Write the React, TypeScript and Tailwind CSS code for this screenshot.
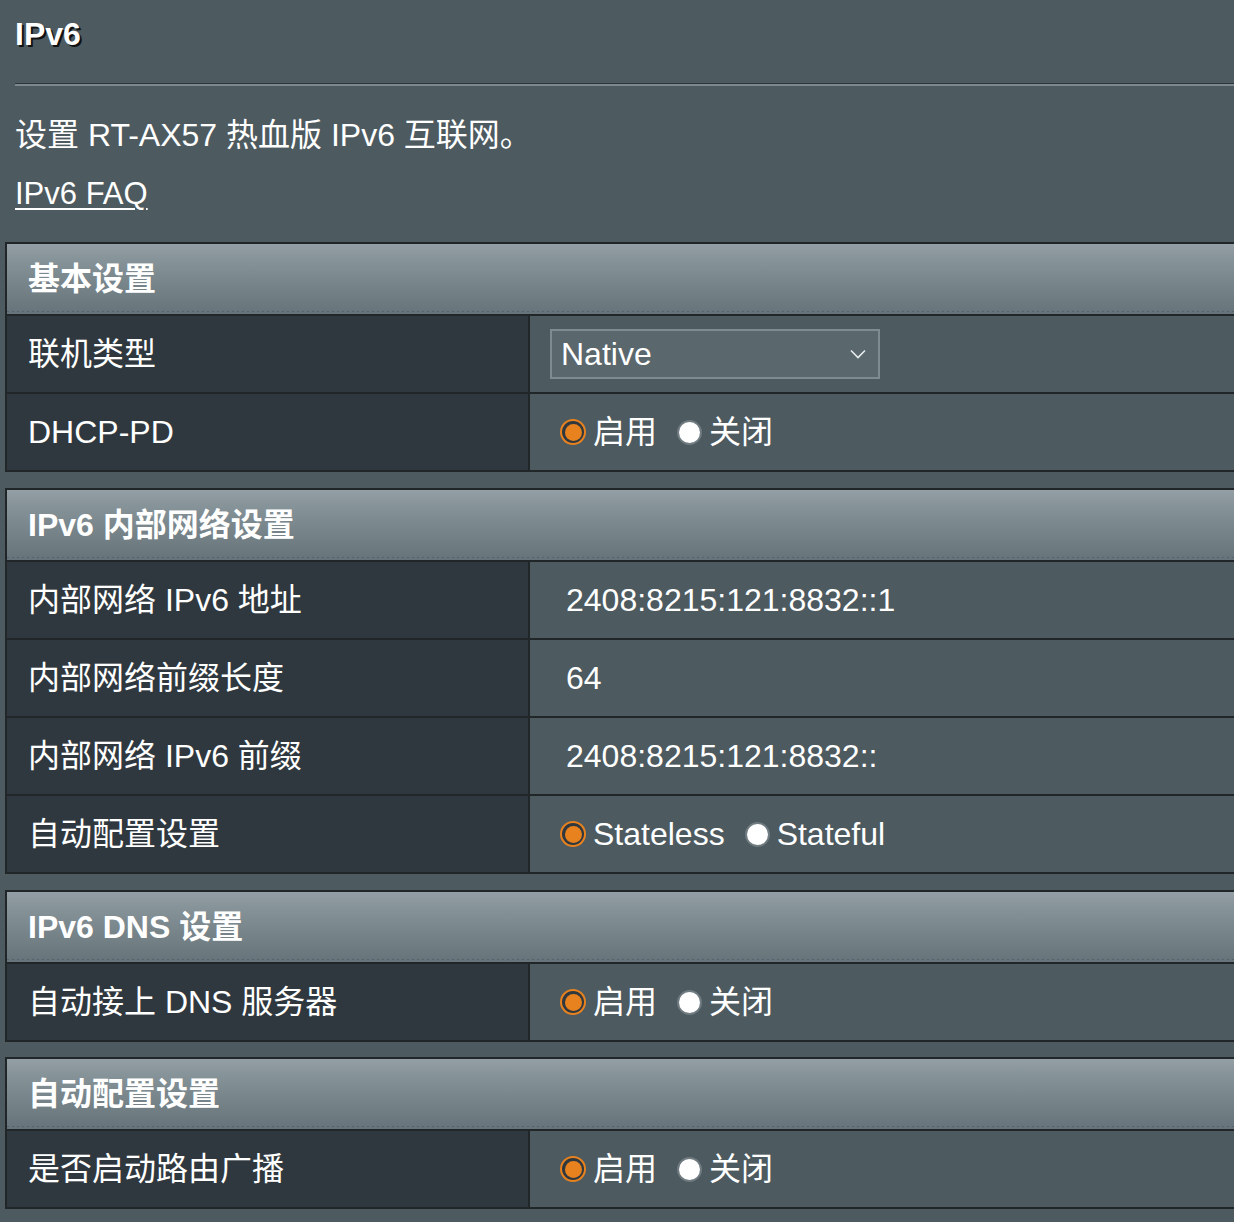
import React from "react";

const FONT = { fontFamily: '"Liberation Sans", Arial, "Noto Sans CJK SC", sans-serif' };

function Radio({ checked }: { checked: boolean }) {
  if (checked) {
    return (
      <span className="inline-flex h-[26px] w-[26px] items-center justify-center rounded-full bg-[#e8821f]">
        <span className="inline-flex h-[22px] w-[22px] items-center justify-center rounded-full bg-[#2f383e]">
          <span className="block h-[17px] w-[17px] rounded-full bg-[#e8821f]" />
        </span>
      </span>
    );
  }
  return (
    <span className="inline-flex h-[25px] w-[25px] items-center justify-center rounded-full bg-[#6f7b81]">
      <span className="block h-[21px] w-[21px] rounded-full bg-white" />
    </span>
  );
}

function RadioGroup({ options }: { options: string[] }) {
  return (
    <div className="flex items-center pl-[30px]">
      {options.map((o, i) => (
        <div key={o} className={"flex items-center gap-[7px] " + (i > 0 ? "ml-[20px]" : "")}>
          <Radio checked={i === 0} />
          <span>{o}</span>
        </div>
      ))}
    </div>
  );
}

function Row({ label, children }: { label: string; children: React.ReactNode }) {
  return (
    <div className="flex h-[78px] border-t-2 border-[#212729]">
      <div className="flex w-[523px] shrink-0 items-center border-r-2 border-[#212729] bg-[#2f383e] pl-[21px]">
        {label}
      </div>
      <div className="flex flex-1 items-center bg-[#4d5a60]">{children}</div>
    </div>
  );
}

function Section({ title, children }: { title: string; children: React.ReactNode }) {
  return (
    <div className="ml-[5px] w-[1240px] border-2 border-[#212729]">
      <div className="relative flex h-[70px] items-center bg-[linear-gradient(to_bottom,#939fa5_0%,#87949a_20%,#7a878d_50%,#6e7b81_80%,#66737a_100%)] pl-[21px] font-bold">
        {title}
        <div className="absolute bottom-[2px] left-0 right-0 h-[1px] bg-[repeating-linear-gradient(to_right,#56626a_0px,#56626a_2px,transparent_2px,transparent_5px)]" />
      </div>
      {children}
    </div>
  );
}

function Value({ text }: { text: string }) {
  return <span className="pl-[36px]">{text}</span>;
}

export default function App() {
  return (
    <div
      className="min-h-[1222px] w-full overflow-hidden bg-[#4d5a60] text-[32px] leading-none text-white"
      style={FONT}
    >
      <div className="flex h-[68px] items-center pl-[15px] text-[32px] font-bold [text-shadow:2px_2px_0_#111]">
        IPv6
      </div>
      <div className="ml-[15px] mt-[15px] h-[3px] border-t border-[#2c353a] bg-[#7c888e]" />
      <div className="mt-[29px] flex h-[40px] items-center pl-[15px] text-[32px]">
        设置 RT-AX57 热血版 IPv6 互联网。
      </div>
      <div className="mt-[18px] flex h-[40px] items-center pl-[15px] text-[31px]">
        <a className="underline underline-offset-[4px] decoration-[2px]">IPv6 FAQ</a>
      </div>

      <div className="mt-[29px]">
        <Section title="基本设置">
          <Row label="联机类型">
            <div className="ml-[20px] flex h-[50px] w-[330px] items-center justify-between border-2 border-[#7e8b91] bg-[#5a676d] pl-[9px] pr-[12px]">
              <span>Native</span>
              <svg width="16" height="10" viewBox="0 0 16 10" fill="none">
                <path d="M1 1.5 L8 8.5 L15 1.5" stroke="#e8ecee" strokeWidth="1.6" />
              </svg>
            </div>
          </Row>
          <Row label="DHCP-PD">
            <RadioGroup options={["启用", "关闭"]} />
          </Row>
        </Section>
      </div>

      <div className="mt-[16px]">
        <Section title="IPv6 内部网络设置">
          <Row label="内部网络 IPv6 地址">
            <Value text="2408:8215:121:8832::1" />
          </Row>
          <Row label="内部网络前缀长度">
            <Value text="64" />
          </Row>
          <Row label="内部网络 IPv6 前缀">
            <Value text="2408:8215:121:8832::" />
          </Row>
          <Row label="自动配置设置">
            <RadioGroup options={["Stateless", "Stateful"]} />
          </Row>
        </Section>
      </div>

      <div className="mt-[16px]">
        <Section title="IPv6 DNS 设置">
          <Row label="自动接上 DNS 服务器">
            <RadioGroup options={["启用", "关闭"]} />
          </Row>
        </Section>
      </div>

      <div className="mt-[15px]">
        <Section title="自动配置设置">
          <Row label="是否启动路由广播">
            <RadioGroup options={["启用", "关闭"]} />
          </Row>
        </Section>
      </div>
    </div>
  );
}
